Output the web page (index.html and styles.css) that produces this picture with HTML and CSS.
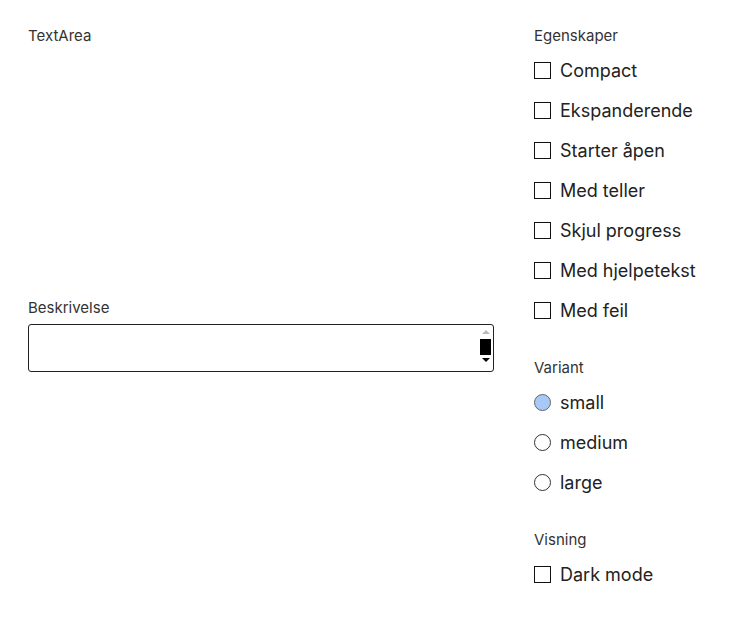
FILE: index.html
```html
<!DOCTYPE html>
<html lang="no">
<head>
<meta charset="utf-8">
<link rel="stylesheet" href="styles.css">
</head>
<body>
<div class="page">
  <section class="preview">
    <h2 class="section-title">TextArea</h2>
    <div class="field">
      <label class="field-label" for="besk">Beskrivelse</label>
      <div class="ta-wrap">
        <textarea id="besk" class="ta" rows="1"></textarea>
        <div class="fake-scroll">
          <span class="arrow up"></span>
          <span class="thumb"></span>
          <span class="arrow down"></span>
        </div>
      </div>
    </div>
  </section>
  <aside class="controls">
    <fieldset class="group">
      <legend class="group-title">Egenskaper</legend>
      <label class="opt"><input type="checkbox"><span>Compact</span></label>
      <label class="opt"><input type="checkbox"><span>Ekspanderende</span></label>
      <label class="opt"><input type="checkbox"><span>Starter åpen</span></label>
      <label class="opt"><input type="checkbox"><span>Med teller</span></label>
      <label class="opt"><input type="checkbox"><span>Skjul progress</span></label>
      <label class="opt"><input type="checkbox"><span>Med hjelpetekst</span></label>
      <label class="opt"><input type="checkbox"><span>Med feil</span></label>
    </fieldset>
    <fieldset class="group">
      <legend class="group-title">Variant</legend>
      <label class="opt"><input type="radio" name="v" checked><span>small</span></label>
      <label class="opt"><input type="radio" name="v"><span>medium</span></label>
      <label class="opt"><input type="radio" name="v"><span>large</span></label>
    </fieldset>
    <fieldset class="group">
      <legend class="group-title">Visning</legend>
      <label class="opt"><input type="checkbox"><span>Dark mode</span></label>
    </fieldset>
  </aside>
</div>
</body>
</html>
```

FILE: styles.css
```css
* { box-sizing: border-box; }
html, body { margin: 0; background: #fff; }
body {
  font-family: Inter, "Noto Sans", sans-serif;
  color: #222;
}
.page {
  display: grid;
  grid-template-columns: 466px 1fr;
  column-gap: 40px;
  padding: 25px 28px;
}
.section-title {
  margin: 0;
  font-size: 15px;
  font-weight: 400;
  line-height: 22px;
  color: #333;
}
.preview {
  display: flex;
  flex-direction: column;
}
.field {
  margin-top: 251px;
  display: flex;
  flex-direction: column;
  gap: 6px;
}
.field-label {
  font-size: 15px;
  line-height: 20px;
  color: #333;
}
.ta-wrap {
  position: relative;
  height: 48px;
}
.ta {
  display: block;
  width: 100%;
  height: 48px;
  border: 1px solid #222;
  border-radius: 3px;
  resize: none;
  overflow: hidden;
  font: inherit;
  padding: 8px;
}
.fake-scroll {
  position: absolute;
  right: 3px;
  top: 3px;
  bottom: 3px;
  width: 11px;
  display: flex;
  flex-direction: column;
  align-items: center;
}
.arrow {
  width: 0; height: 0;
  border-left: 4px solid transparent;
  border-right: 4px solid transparent;
}
.arrow.up { border-bottom: 4px solid #bbb; margin-top: 3px; }
.arrow.down { border-top: 4px solid #000; margin-top: 3px; }
.thumb {
  width: 11px;
  height: 16px;
  background: #000;
  margin-top: 5px;
}
.controls {
  display: flex;
  flex-direction: column;
  gap: 27px;
}
.group {
  border: 0;
  margin: 0;
  padding: 0;
  min-width: 0;
  display: flex;
  flex-direction: column;
}
.group-title {
  padding: 0;
  font-size: 15px;
  line-height: 22px;
  color: #333;
  margin-bottom: 3px;
}
.opt {
  display: flex;
  align-items: center;
  gap: 9px;
  height: 40px;
  font-size: 18px;
  color: #222;
}
.opt input {
  appearance: none;
  margin: 0;
  width: 17px;
  height: 17px;
  border: 1px solid #111;
  background: #fff;
  flex: none;
}
.opt input[type="radio"] {
  border-radius: 50%;
  border-color: #333;
}
.opt input[type="radio"]:checked {
  background: #a8c8f8;
  border-color: #666;
}
```
